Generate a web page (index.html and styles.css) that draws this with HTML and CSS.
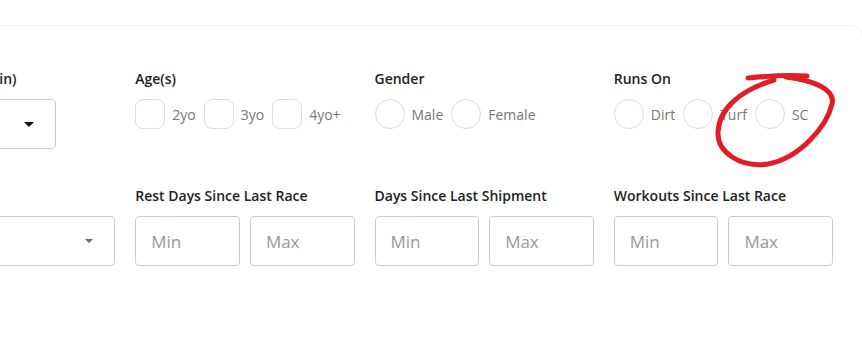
FILE: index.html
```html
<!DOCTYPE html>
<html lang="en">
  <head>
    <meta charset="UTF-8" />
    <meta name="viewport" content="width=device-width, initial-scale=1.0" />
    <title>Race Filters</title>
    <link rel="stylesheet" href="styles.css">
  </head>
  <body>
    <div class="page">
      <div class="card">
        <div class="filters">
          <div class="field">
            <label class="field-label field-label-first">Race Distance (Min)</label>
            <div class="dropdown dropdown-short"><span class="caret"></span></div>
          </div>
          <div class="field">
            <label class="field-label">Age(s)</label>
            <div class="options">
              <span class="option"><span class="box"></span>2yo</span>
              <span class="option"><span class="box"></span>3yo</span>
              <span class="option"><span class="box"></span>4yo+</span>
            </div>
          </div>
          <div class="field">
            <label class="field-label">Gender</label>
            <div class="options">
              <span class="option"><span class="box round"></span>Male</span>
              <span class="option"><span class="box round"></span>Female</span>
            </div>
          </div>
          <div class="field">
            <label class="field-label">Runs On</label>
            <div class="options">
              <span class="option"><span class="box round"></span>Dirt</span>
              <span class="option"><span class="box round"></span>Turf</span>
              <span class="option"><span class="box round"></span>SC</span>
            </div>
          </div>

          <div class="field">
            <label class="field-label">&nbsp;</label>
            <div class="dropdown"><span class="caret caret-small"></span></div>
          </div>
          <div class="field">
            <label class="field-label">Rest Days Since Last Race</label>
            <div class="range">
              <input type="text" placeholder="Min" />
              <input type="text" placeholder="Max" />
            </div>
          </div>
          <div class="field">
            <label class="field-label">Days Since Last Shipment</label>
            <div class="range">
              <input type="text" placeholder="Min" />
              <input type="text" placeholder="Max" />
            </div>
          </div>
          <div class="field">
            <label class="field-label">Workouts Since Last Race</label>
            <div class="range">
              <input type="text" placeholder="Min" />
              <input type="text" placeholder="Max" />
            </div>
          </div>
        </div>
      </div>

      <!-- hand drawn mark round the SC option -->
      <svg class="scribble" width="862" height="353" viewBox="0 0 862 353">
        <path d="M748,78 C768,76 790,75 807,76" />
        <path d="M786,77 C812,80 836,89 832,104 C827,126 800,158 768,164 C740,168 717,152 718,132 C719,110 738,91 774,80" />
      </svg>
    </div>
  </body>
</html>
```

FILE: styles.css
```css
body {
  margin: 0;
  background: #fff;
  font-family: "Open Sans", "Noto Sans", Arial, sans-serif;
}
.page {
  position: relative;
  padding-top: 25px;
  height: 328px;
  overflow: hidden;
}
.card {
  margin-left: -140px;
  margin-right: -1px;
  border: 1px solid #f0f0f0;
  border-radius: 12px;
  padding: 40px 29px 220px 35px;
}
.filters {
  display: grid;
  grid-template-columns: repeat(4, 1fr);
  column-gap: 20px;
  row-gap: 34px;
}
.field-label {
  display: block;
  font-size: 14px;
  font-weight: 600;
  color: #222;
  line-height: 26px;
  margin-bottom: 7px;
  white-space: nowrap;
}
.field-label-first {
  text-indent: -12px;
}
.options {
  display: flex;
  align-items: center;
  gap: 8px;
}
.option {
  display: flex;
  align-items: center;
  gap: 7px;
  font-size: 14px;
  color: #777;
}
.box {
  width: 28px;
  height: 28px;
  border: 1px solid #ddd;
  border-radius: 8px;
}
.box.round {
  border-radius: 50%;
}
.dropdown {
  height: 48px;
  border: 1px solid #ccc;
  border-radius: 4px;
  display: flex;
  align-items: center;
  justify-content: flex-end;
  padding-right: 21px;
}
.dropdown-short {
  width: 137px;
}
.caret {
  width: 0;
  height: 0;
  border-left: 5px solid transparent;
  border-right: 5px solid transparent;
  border-top: 5px solid #111;
}
.caret-small {
  border-left-width: 4px;
  border-right-width: 4px;
  border-top: 4px solid #666;
}
.range {
  display: flex;
  gap: 10px;
}
.range input {
  width: 50%;
  min-width: 0;
  height: 50px;
  box-sizing: border-box;
  border: 1px solid #ccc;
  border-radius: 4px;
  padding: 0 15px;
  font-family: inherit;
  font-size: 17px;
  color: #333;
}
.range input::placeholder {
  color: #999;
}
.scribble {
  position: absolute;
  top: 0;
  left: 0;
  pointer-events: none;
}
.scribble path {
  fill: none;
  stroke: #e01e25;
  stroke-width: 5;
  stroke-linecap: round;
}
```
